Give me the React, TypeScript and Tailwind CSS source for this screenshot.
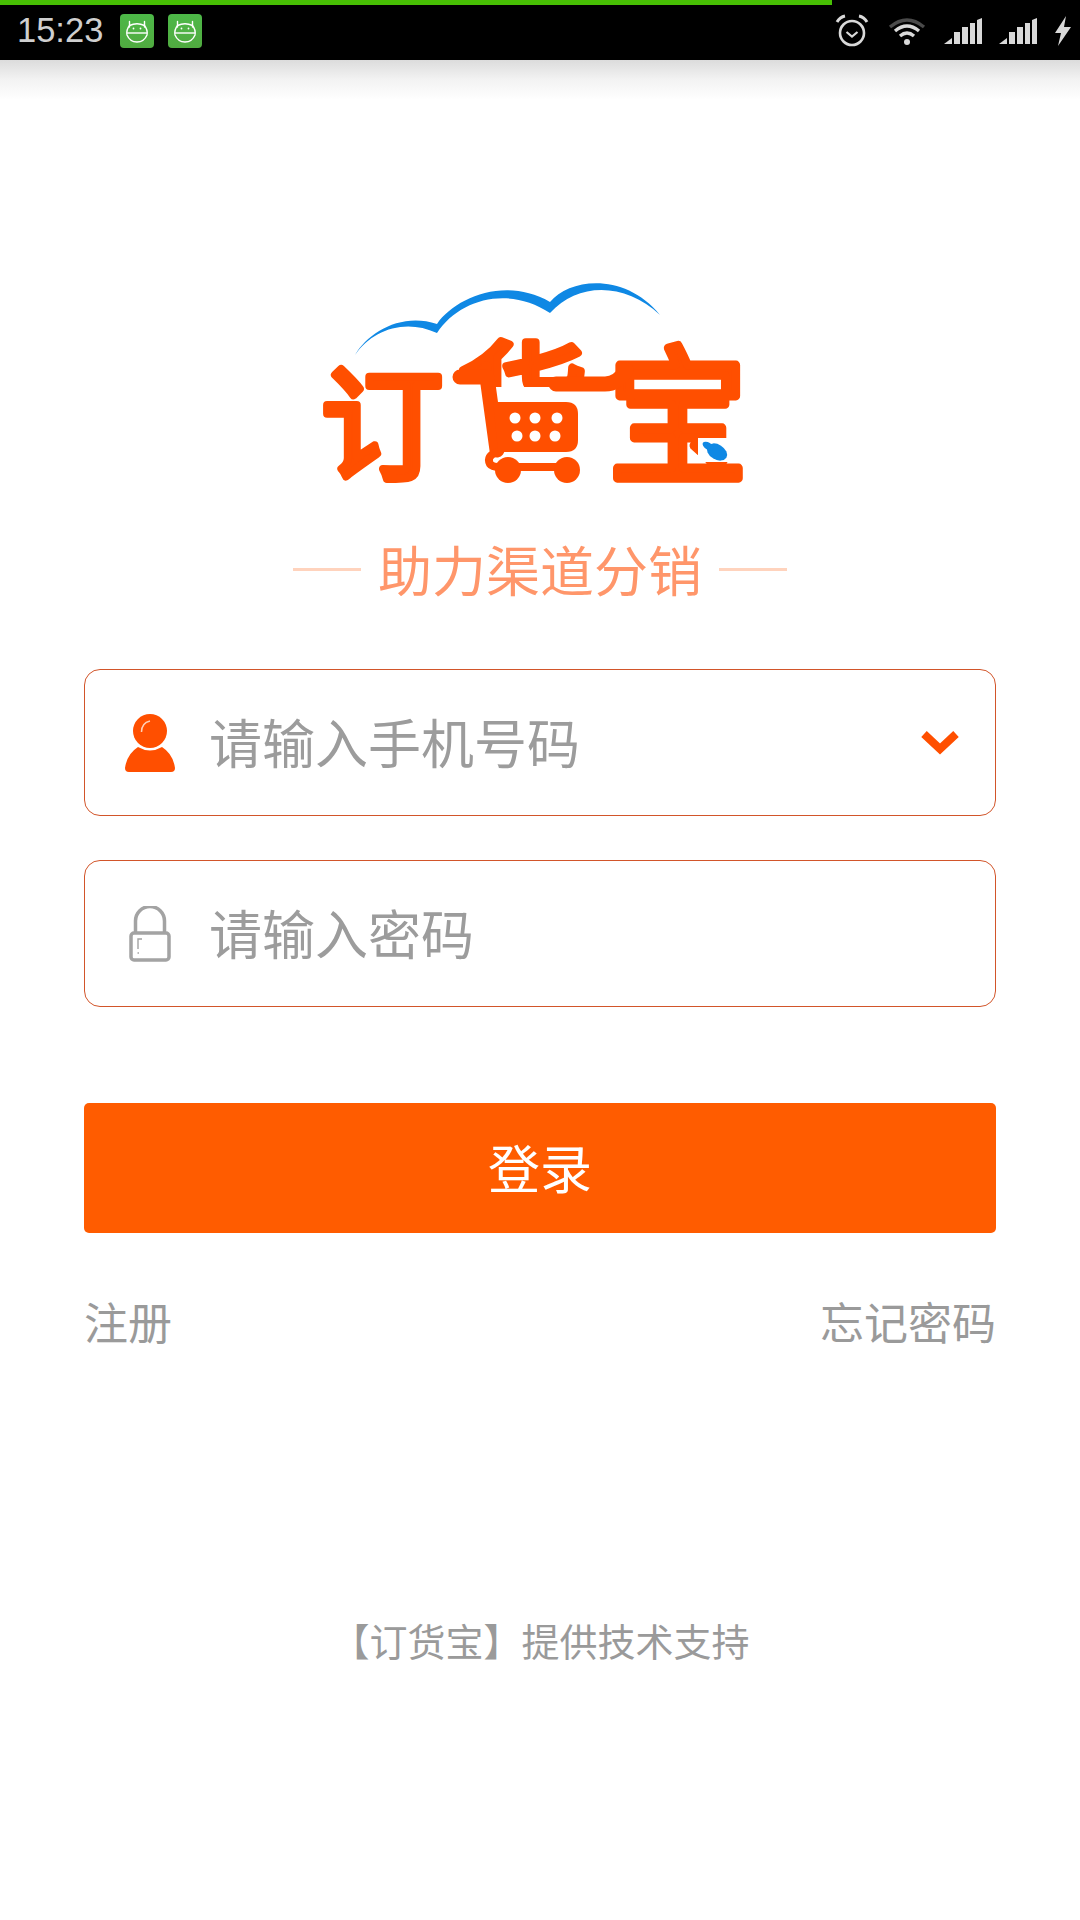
const CJK = "font-['Noto_Sans_CJK_SC','Noto_Sans',sans-serif]";

function Android() {
  return (
    <div className="w-[34px] h-[34px] rounded-[4px] bg-gradient-to-b from-[#4db848] to-[#50ab40] flex items-center justify-center">
      <svg width="28" height="28" viewBox="0 0 28 28" fill="none" stroke="#fff" strokeWidth="1.4">
        <path d="M6.5 4.5 L6.5 10 M21.5 4.5 L21.5 10" strokeLinecap="round" />
        <path d="M6.5 8.5 Q14 5 21.5 8.5 Q25 13 24 18 Q21 25 14 25 Q7 25 4 18 Q3 13 6.5 8.5 Z" />
        <path d="M3.5 16 H24.5" />
        <circle cx="10.5" cy="11.5" r="0.9" fill="#fff" stroke="none" />
        <circle cx="17.5" cy="11.5" r="0.9" fill="#fff" stroke="none" />
      </svg>
    </div>
  );
}

function Signal() {
  return (
    <svg width="38" height="26" viewBox="0 0 38 26" fill="#d9d9d9">
      <path d="M0 26 L8 20 V26 Z" />
      <rect x="10" y="14" width="6" height="12" />
      <rect x="18" y="9" width="6" height="17" />
      <rect x="26" y="5" width="5" height="21" />
      <path d="M33 2 L38 0 V26 H33 Z" />
    </svg>
  );
}

function StatusBar() {
  return (
    <div className="h-[60px] bg-black relative shrink-0 flex items-center pl-[17px] pr-[9px] text-[#cfcfcf]">
      <div className="absolute left-0 top-0 h-[5px] w-[832px] bg-[#47bf04]" />
      <span className="font-['Liberation_Sans',sans-serif] text-[34.5px] leading-none w-[103px] mt-[1px]">15:23</span>
      <div className="flex gap-[14px] mt-[1px]">
        <Android />
        <Android />
      </div>
      <div className="ml-auto flex items-center mt-[1px]">
        <svg width="34" height="34" viewBox="0 0 34 34" fill="none" stroke="#d9d9d9" strokeWidth="2.6">
          <circle cx="17" cy="19" r="12" />
          <path d="M11.5 18 L17 22.5 L22.5 18" strokeWidth="2.2" />
          <path d="M2 8 Q5 3 10 2 M32 8 Q29 3 24 2" strokeWidth="3" />
        </svg>
        <svg className="ml-[19px]" width="38" height="30" viewBox="0 0 38 30" fill="none" strokeLinecap="butt">
          <path d="M2 11 Q19 -3 36 11" stroke="#4a4a4a" strokeWidth="3.4" />
          <path d="M7 15 Q19 5 31 15" stroke="#d9d9d9" strokeWidth="3.4" />
          <path d="M12 20 Q19 14 26 20" stroke="#d9d9d9" strokeWidth="3.4" />
          <circle cx="19" cy="26" r="3" fill="#d9d9d9" />
        </svg>
        <div className="ml-[18px]"><Signal /></div>
        <div className="ml-[17px]"><Signal /></div>
        <svg className="ml-[18px]" width="16" height="30" viewBox="0 0 16 30" fill="#d9d9d9">
          <path d="M11 0 L0 17 H6 L3 30 L16 11 H9 Z" />
        </svg>
      </div>
    </div>
  );
}

function Logo() {
  const glyph = {
    fontFamily: "'Noto Sans CJK SC', sans-serif",
    fontWeight: 400,
    fill: "#ff4f00",
    stroke: "#ff4f00",
    strokeWidth: 8,
    strokeLinejoin: "round" as const,
    strokeLinecap: "round" as const,
  };
  return (
    <svg width="440" height="210" viewBox="0 0 440 210" className="block overflow-visible">
      {/* x = page x - 320, y = page y - 280 */}
      <path
        d="M35 75 C48 52 82 32 117 44 C135 18 185 -4 230 22 C250 -2 305 -8 340 35 C305 2 258 2 230 33 C190 6 140 18 117 53 C85 38 52 50 35 75 Z"
        fill="#0f88e4"
      />
      <text x="1" y="189" style={{ ...glyph, fontSize: 122 }}>订</text>
      <text x="138" y="171" style={{ ...glyph, fontSize: 130 }}>货</text>
      <rect x="135" y="107" width="145" height="100" fill="#fff" />
      <text transform="translate(288 190) scale(1.05 1.1)" style={{ ...glyph, fontSize: 133 }}>宝</text>
      <g fill="none" stroke="#ff4f00" strokeLinecap="round" strokeLinejoin="round">
        <path d="M140 97 H167 L177 170" strokeWidth="15" />
        <path d="M177 172 Q166 176 170 184 Q172 187 180 187 H250" strokeWidth="8" />
        <path d="M236 104 H285 Q298 104 306 90" strokeWidth="15" />
      </g>
      <path d="M173 122 H246 Q258 122 258 134 V160 Q258 172 246 172 H178 Z" fill="#ff4f00" />
      <g fill="#fff">
        <circle cx="195" cy="138" r="5.5" /><circle cx="215" cy="138" r="5.5" /><circle cx="237" cy="138" r="5.5" />
        <circle cx="197" cy="156" r="5.5" /><circle cx="215" cy="156" r="5.5" /><circle cx="235" cy="156" r="5.5" />
      </g>
      <circle cx="188" cy="190" r="13" fill="#ff4f00" />
      <circle cx="247" cy="190" r="13" fill="#ff4f00" />
      <rect x="378" y="158" width="32" height="24" fill="#fff" />
      <ellipse cx="397" cy="172" rx="11" ry="7.5" transform="rotate(32 397 172)" fill="#0f88e4" />
      <ellipse cx="388" cy="166" rx="6" ry="3.5" transform="rotate(32 388 166)" fill="#0f88e4" />
    </svg>
  );
}

function Tagline() {
  return (
    <div className="flex items-center justify-center mt-[48px] h-[62px]">
      <div className="w-[68px] h-[3px] bg-[#ffd3bd]" />
      <span className={`${CJK} text-[#ff966a] text-[54px] leading-[62px] mx-[17px]`}>助力渠道分销</span>
      <div className="w-[68px] h-[3px] bg-[#ffd3bd]" />
    </div>
  );
}

function Field({ icon, text, right }: { icon: React.ReactNode; text: string; right?: React.ReactNode }) {
  return (
    <div className="h-[147px] border border-[#d2552a] rounded-[16px] flex items-center pl-[39px] pr-[36px] bg-white">
      <div className="w-[52px] flex justify-center">{icon}</div>
      <span className={`${CJK} ml-[33px] -mt-[3px] text-[53px] leading-none text-[#9c9c9c]`}>{text}</span>
      {right && <div className="ml-auto">{right}</div>}
    </div>
  );
}

export default function App() {
  return (
    <div className="w-[1080px] h-[1920px] bg-white flex flex-col overflow-hidden">
      <StatusBar />
      <div className="h-[40px] shrink-0 bg-gradient-to-b from-[#dcdcdc] via-[#f3f3f3] to-white" />
      <div className="flex flex-col flex-1 px-[84px]">
        <div className="flex justify-center mt-[180px]"><Logo /></div>
        <Tagline />
        <div className="flex flex-col gap-[44px] mt-[69px]">
          <Field
            text="请输入手机号码"
            icon={
              <svg width="52" height="58" viewBox="0 0 52 58">
                <circle cx="26" cy="17" r="17" fill="#ff4f00" />
                <path d="M1 54 Q3 40 14 33 Q26 40 38 33 Q49 40 51 54 Q51 58 47 58 H5 Q1 58 1 54 Z" fill="#ff4f00" />
                <path d="M17.5 18 Q17.5 9 26 7" fill="none" stroke="#ffd0b8" strokeWidth="1.5" />
              </svg>
            }
            right={
              <svg width="38" height="26" viewBox="0 0 38 26" fill="none" stroke="#ff4f00" strokeWidth="8">
                <path d="M3 4 L19 19 L35 4" />
              </svg>
            }
          />
          <Field
            text="请输入密码"
            icon={
              <svg width="42" height="56" viewBox="0 0 42 56" fill="none" stroke="#a3a3a3" strokeWidth="3.5">
                <path d="M6.5 27 V15 A14.5 14.5 0 0 1 35.5 15 V27" />
                <rect x="2" y="27" width="38" height="27" rx="3" />
                <path d="M9 43 V33 H13" strokeWidth="1.4" />
                <path d="M8.5 47 H10" strokeWidth="1.4" />
              </svg>
            }
          />
        </div>
        <button className={`${CJK} mt-[96px] h-[130px] rounded-[5px] bg-[#ff5c00] text-white text-[52px] pb-[2px]`}>登录</button>
        <div className={`${CJK} flex justify-between mt-[60px] text-[44px] leading-[56px] text-[#9a9a9a]`}>
          <span>注册</span>
          <span>忘记密码</span>
        </div>
        <div className={`${CJK} text-center mt-[266px] text-[38px] leading-[50px] text-[#9a9a9a] pl-[1px]`}>【订货宝】提供技术支持</div>
      </div>
    </div>
  );
}
